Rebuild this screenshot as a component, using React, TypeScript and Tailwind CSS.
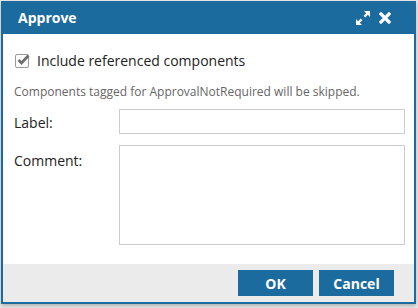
export default function App() {
  return (
    <div className="w-[418px] h-[308px] bg-[#ebebeb] pt-px pl-px" style={{ fontFamily: '"Open Sans", sans-serif' }}>
      <div className="w-[415px] h-[303px] border-2 border-[#1c6b9e] bg-white flex flex-col shadow-[0_2px_4px_rgba(0,0,0,0.25)]">
        <div className="h-[33px] bg-[#1c6b9e] flex items-center justify-between pl-[15px] pr-[25px] -mx-[2px] -mt-[2px]">
          <span className="text-white font-bold text-[14px] pl-[2px]">Approve</span>
          <div className="flex items-center gap-[9px] text-white">
            <svg width="14" height="14" viewBox="0 0 14 14" fill="white">
              <path d="M8 0h6v6l-2.2-2.2-2.6 2.6-1.6-1.6 2.6-2.6z" />
              <path d="M6 14H0V8l2.2 2.2 2.6-2.6 1.6 1.6-2.6 2.6z" />
            </svg>
            <svg width="12" height="12" viewBox="0 0 12 12" stroke="white" strokeWidth="3.2" strokeLinecap="square">
              <path d="M2 2l8 8M10 2l-8 8" />
            </svg>
          </div>
        </div>
        <div className="flex-1 pl-[11px] pr-[9px] pt-[16px]">
          <label className="flex items-center gap-[8px] text-[14px] text-[#222]">
            <span className="w-[14px] h-[14px] border border-[#999] rounded-[2px] relative bg-white ml-[1px]">
              <svg className="absolute -top-[1px] left-[1px]" width="13" height="12" viewBox="0 0 13 12" fill="none" stroke="#6f6f6f" strokeWidth="2.8">
                <path d="M1.5 6l3 3 7-7.5" />
              </svg>
            </span>
            Include referenced components
          </label>
          <div className="text-[12px] text-[#666] mt-[12px]">Components tagged for ApprovalNotRequired will be skipped.</div>
          <div className="grid grid-cols-[105px_1fr] gap-y-[11px] mt-[8px] text-[14px] text-[#222]">
            <div className="pt-[3px]">Label:</div>
            <div className="h-[25px] border border-[#ccc]"></div>
            <div className="pt-[5px]">Comment:</div>
            <div className="h-[100px] border border-[#ccc]"></div>
          </div>
        </div>
        <div className="h-[38px] bg-[#ebebeb] flex items-center justify-end gap-[6px] pr-[20px]">
          <button className="w-[75px] h-[26px] bg-[#1c6b9e] text-white font-bold text-[14px]">OK</button>
          <button className="w-[75px] h-[26px] bg-[#1c6b9e] text-white font-bold text-[14px]">Cancel</button>
        </div>
      </div>
    </div>
  );
}
